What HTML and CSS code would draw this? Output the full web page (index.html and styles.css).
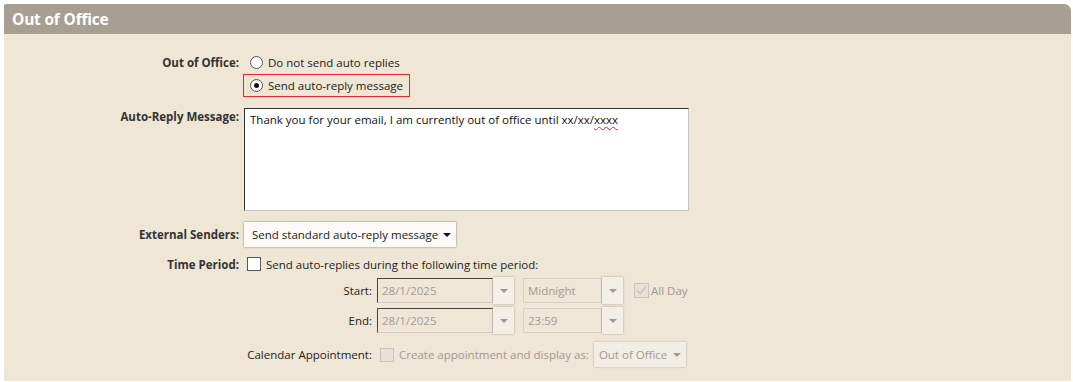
FILE: index.html
```html
<!DOCTYPE html>
<html lang="en">
<head>
  <meta charset="UTF-8" />
  <title>Out of Office</title>
  <link rel="stylesheet" href="styles.css">
</head>
<body>
  <div class="panel">
    <div class="panel-title">Out of Office</div>

    <div class="panel-body">
      <div class="row row-first">
        <div class="label">Out of Office:</div>
        <div class="field">
          <label class="radio-line">
            <span class="radio"></span>
            Do not send auto replies
          </label>
        </div>
      </div>

      <div class="row row-tight">
        <div class="label"></div>
        <div class="field">
          <label class="radio-line highlighted">
            <span class="radio checked"></span>
            Send auto-reply message
          </label>
        </div>
      </div>

      <div class="row row-message">
        <div class="label label-top">Auto-Reply Message:</div>
        <div class="field">
          <div class="message-box">Thank you for your email, I am currently out of office until xx/xx/<span class="misspelt">xxxx</span></div>
        </div>
      </div>

      <div class="row row-senders">
        <div class="label">External Senders:</div>
        <div class="field">
          <div class="select-btn">Send standard auto-reply message <span class="caret dark"></span></div>
        </div>
      </div>

      <div class="row row-period">
        <div class="label">Time Period:</div>
        <div class="field">
          <label class="check-line">
            <span class="checkbox"></span>
            Send auto-replies during the following time period:
          </label>
        </div>
      </div>

      <div class="row row-start">
        <div class="label"></div>
        <div class="field sub-row">
          <div class="sub-label">Start:</div>
          <div class="picker">
            <div class="picker-input">28/1/2025</div>
            <div class="picker-btn"><span class="caret"></span></div>
          </div>
          <div class="picker time">
            <div class="picker-input flat">Midnight</div>
            <div class="picker-btn"><span class="caret"></span></div>
          </div>
          <label class="check-line disabled allday">
            <span class="checkbox ticked">
              <svg width="13" height="13" viewBox="0 0 13 13"><path d="M2.5 6.8 L5.2 9.4 L10.6 3.2" fill="none" stroke="#c4c0b8" stroke-width="1.4"/></svg>
            </span>
            All Day
          </label>
        </div>
      </div>

      <div class="row row-end">
        <div class="label"></div>
        <div class="field sub-row">
          <div class="sub-label">End:</div>
          <div class="picker">
            <div class="picker-input">28/1/2025</div>
            <div class="picker-btn"><span class="caret"></span></div>
          </div>
          <div class="picker time">
            <div class="picker-input flat">23:59</div>
            <div class="picker-btn"><span class="caret"></span></div>
          </div>
        </div>
      </div>

      <div class="row row-calendar">
        <div class="label"></div>
        <div class="field sub-row">
          <div class="sub-label">Calendar Appointment:</div>
          <label class="check-line disabled">
            <span class="checkbox"></span>
            Create appointment and display as:
          </label>
          <div class="select-btn small disabled">Out of Office <span class="caret"></span></div>
        </div>
      </div>
    </div>
  </div>
</body>
</html>
```

FILE: styles.css
```css
* {
  margin: 0;
  padding: 0;
  box-sizing: border-box;
}

body {
  font-family: 'Open Sans', 'Liberation Sans', sans-serif;
  font-size: 11.5px;
  color: #222;
  background: #fff;
  padding: 4px 2px 0 4px;
}

.panel {
  background: #efe6d5;
  border-top-right-radius: 7px;
  border-top-left-radius: 2px;
  overflow: hidden;
}

.panel-title {
  background: #a79f92;
  color: #fff;
  font-weight: 700;
  font-size: 15.5px;
  letter-spacing: -0.2px;
  height: 30px;
  line-height: 31px;
  padding-left: 8px;
}

.panel-body {
  padding-bottom: 14px;
}

/* form rows */
.row {
  display: grid;
  grid-template-columns: 235px 1fr;
  column-gap: 5px;
  align-items: center;
}

.row-first { margin-top: 17px; height: 20px; }
.row-tight { margin-top: 3px; }
.row-message { margin-top: 11px; align-items: start; }
.row-senders { margin-top: 11px; }
.row-period { margin-top: 8px; height: 18px; }
.row-start { margin-top: 4px; }
.row-end { margin-top: 3px; }
.row-calendar { margin-top: 8px; }

.label {
  text-align: right;
  font-weight: 700;
  color: #333;
}

.label-top {
  padding-top: 1px;
}

.field {
  display: flex;
  align-items: center;
}

/* radios & checkboxes */
.radio-line,
.check-line {
  display: flex;
  align-items: center;
  gap: 5px;
  color: #222;
  white-space: nowrap;
}

.radio-line {
  padding-left: 6px;
  height: 23px;
}

.radio-line.highlighted {
  border: 1px solid #e8262b;
  margin-left: -1px;
  width: 167px;
}

.radio {
  width: 13px;
  height: 13px;
  border: 1px solid #555;
  border-radius: 50%;
  background: #fff;
  position: relative;
}

.radio.checked::after {
  content: "";
  position: absolute;
  left: 3px;
  top: 3px;
  width: 5px;
  height: 5px;
  border-radius: 50%;
  background: #111;
}

.checkbox {
  width: 14px;
  height: 14px;
  border: 1px solid #555;
  background: #fff;
  display: inline-flex;
}

.check-line {
  padding-left: 3px;
}

.check-line.disabled {
  color: #9e9a93;
}

.check-line.disabled .checkbox {
  border-color: #c8c4bd;
  background: #e6e2db;
}

/* message */
.message-box {
  width: 445px;
  height: 103px;
  background: #fff;
  border: 1px solid #c9c6c0;
  border-top-color: #333;
  border-left-color: #333;
  padding: 3px 5px;
  color: #111;
}

.misspelt {
  text-decoration: underline wavy #e0292b;
  text-decoration-thickness: 1px;
  text-underline-offset: 2px;
}

/* select buttons */
.select-btn {
  height: 25px;
  display: flex;
  align-items: center;
  gap: 5px;
  padding: 0 5px 0 8px;
  background: #fbfaf7;
  box-shadow: 0 0 2px rgba(0, 0, 0, 0.45);
  color: #222;
  white-space: nowrap;
}

.select-btn.small {
  margin-left: 5px;
  padding: 0 5px;
  gap: 6px;
}

.select-btn.disabled {
  background: #f3eee5;
  color: #9e9a93;
  box-shadow: 0 0 2px rgba(0, 0, 0, 0.25);
}

.caret {
  width: 0;
  height: 0;
  border-left: 4px solid transparent;
  border-right: 4px solid transparent;
  border-top: 4px solid #999;
}

.caret.dark {
  border-top-color: #111;
}

/* start / end rows */
.sub-row {
  display: flex;
  align-items: center;
}

.sub-label {
  width: 128px;
  text-align: right;
  margin-right: 5px;
  color: #222;
  white-space: nowrap;
}

.picker {
  display: flex;
  align-items: center;
  margin-right: 9px;
}

.picker-input {
  width: 116px;
  height: 25px;
  line-height: 23px;
  padding-left: 4px;
  color: #a09c95;
  border: 1px solid #d2cdc4;
  border-top-color: #444;
  border-left-color: #444;
}

.picker-input.flat {
  width: 79px;
  border-color: #d6d1c8;
}

.picker-btn {
  width: 21px;
  height: 27px;
  background: #f3efe7;
  box-shadow: 0 0 2px rgba(0, 0, 0, 0.3);
  display: flex;
  align-items: center;
  justify-content: center;
}

.allday {
  padding-left: 2px;
  gap: 2px;
}

.checkbox.ticked {
  width: 15px;
  height: 15px;
  align-items: center;
  justify-content: center;
}
```
